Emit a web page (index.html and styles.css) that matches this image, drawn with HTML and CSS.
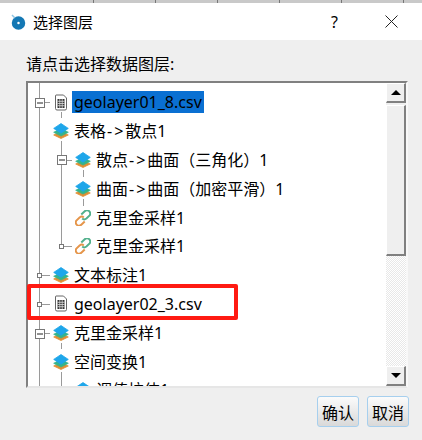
FILE: index.html
```html
<!DOCTYPE html>
<html lang="zh">
    <head>
        <meta charset="utf-8">
        <title>选择图层</title>
        <link rel="stylesheet" href="styles.css">
    </head>
    <body>
        <svg class="defs" width="0" height="0">
            <symbol id="layers" viewBox="0 0 16 16">
                <path d="M8 8.500 L15.300 12 L8 15.500 L.7 12 Z" fill="#e08f35" stroke="#e08f35" stroke-width=".8" stroke-linejoin="round"/>
                <path d="M8 5.500 L15.300 9.300 L8 13 L.7 9.300 Z" fill="#35b48c" stroke="#35b48c" stroke-width=".8" stroke-linejoin="round"/>
                <path d="M8 .5 L15.300 5.400 L8 10.300 L.7 5.400 Z" fill="#1ea6ea" stroke="#1ea6ea" stroke-width=".8" stroke-linejoin="round"/>
            </symbol>
            <symbol id="sheet" viewBox="0 0 13 17">
                <path d="M1.500 1 H9 L12 4 V14.500 Q12 16 10.500 16 H2.500 Q1 16 1 14.500 V2 Q1 1 1.500 1 Z" fill="#fff" stroke="#666"/>
                <path d="M3 5 H10 V14 H3 Z" fill="#333"/>
                <path d="M3 7.300 H10 M3 9.500 H10 M3 11.700 H10 M5.300 5 V14 M7.700 5 V14" stroke="#ddd" stroke-width=".8"/>
            </symbol>
            <symbol id="link" viewBox="1.500 1.500 14 14">
                <path d="M7 5.500 L10 2.600 Q11.600 1 13.500 2.200 Q15.800 4 14.300 6.300 L11.500 9 Q9.500 10.500 7.800 9" fill="none" stroke="#52b08c" stroke-width="1.700"/>
                <path d="M10 11.500 L7 14.400 Q5.400 16 3.500 14.800 Q1.200 13 2.700 10.700 L5.500 8 Q7.500 6.500 9.200 8" fill="none" stroke="#e5954a" stroke-width="1.700"/>
            </symbol>
        </svg>

        <div class="dialog">
            <div class="strip"></div>
            <div class="titlebar">
                <svg class="appicon" width="16" height="16" viewBox="0 0 16 16">
                    <circle cx="8.500" cy="9" r="4" fill="none" stroke="#1478b4" stroke-width="5.500"/>
                    <path d="M2 1 L5 4" stroke="#8fc4e2" stroke-width="1.500"/>
                </svg>
                <span class="title">选择图层</span>
                <span class="help">?</span>
                <svg class="close" width="13" height="13" viewBox="0 0 13 13">
                    <path d="M.5 .5 L12.500 12.500 M12.500 .5 L.5 12.500" stroke="#222" stroke-width="1"/>
                </svg>
            </div>

            <div class="content">
                <p class="label">请点击选择数据图层:</p>

                <div class="treebox">
                    <div class="tree">
                        <!-- connectors use page coordinates through the viewBox -->
                        <svg class="lines" width="358" height="303" viewBox="28 83 358 303">
                            <g stroke="#9a9a9a" fill="none">
                                <path d="M39.500 83 V386"/>
                                <path d="M44 102.500 H50 M42 275.500 H50 M42 304.500 H50 M44 333.500 H50"/>
                                <path d="M61.500 112 V118 M61.500 141 V246.500 H72 M66 160.500 H72"/>
                                <path d="M83.500 170 V177 M83.500 199 V206"/>
                                <path d="M61.500 343 V349 M61.500 372 V386"/>
                            </g>
                            <g fill="#fff" stroke="#777">
                                <rect x="35.500" y="98.500" width="9" height="9"/>
                                <rect x="57.500" y="155.500" width="9" height="9"/>
                                <rect x="35.500" y="329.500" width="9" height="9"/>
                                <rect x="37.500" y="273.500" width="4" height="4"/>
                                <rect x="37.500" y="302.500" width="4" height="4"/>
                                <rect x="59.500" y="244.500" width="4" height="4"/>
                            </g>
                            <path d="M37 103 H43 M59 160 H65 M37 334 H43" stroke="#222"/>
                        </svg>

                        <div class="row level1">
                            <svg class="icon sheet"><use href="#sheet"/></svg>
                            <span class="name selected">geolayer01_8.csv</span>
                        </div>
                        <div class="row level1">
                            <svg class="icon"><use href="#layers"/></svg>
                            <span class="name">表格<span class="op">-&gt;</span>散点1</span>
                        </div>
                        <div class="row level2">
                            <svg class="icon"><use href="#layers"/></svg>
                            <span class="name">散点<span class="op">-&gt;</span>曲面（三角化）1</span>
                        </div>
                        <div class="row level2">
                            <svg class="icon"><use href="#layers"/></svg>
                            <span class="name">曲面<span class="op">-&gt;</span>曲面（加密平滑）1</span>
                        </div>
                        <div class="row level2">
                            <svg class="icon"><use href="#link"/></svg>
                            <span class="name">克里金采样1</span>
                        </div>
                        <div class="row level2">
                            <svg class="icon"><use href="#link"/></svg>
                            <span class="name">克里金采样1</span>
                        </div>
                        <div class="row level1">
                            <svg class="icon"><use href="#layers"/></svg>
                            <span class="name">文本标注1</span>
                        </div>
                        <div class="row level1">
                            <svg class="icon sheet"><use href="#sheet"/></svg>
                            <span class="name">geolayer02_3.csv</span>
                        </div>
                        <div class="row level1">
                            <svg class="icon"><use href="#layers"/></svg>
                            <span class="name">克里金采样1</span>
                        </div>
                        <div class="row level1">
                            <svg class="icon"><use href="#layers"/></svg>
                            <span class="name">空间变换1</span>
                        </div>
                        <div class="row level2">
                            <svg class="icon"><use href="#layers"/></svg>
                            <span class="name">调值拉伸1</span>
                        </div>
                    </div>

                    <div class="scrollbar">
                        <div class="arrow"><span class="tri up"></span></div>
                        <div class="thumb"></div>
                        <div class="track"></div>
                        <div class="arrow"><span class="tri down"></span></div>
                    </div>
                </div>

                <div class="mark"></div>

                <div class="buttons">
                    <button>确认</button>
                    <button>取消</button>
                </div>
            </div>
        </div>
    </body>
</html>
```

FILE: styles.css
```css
html, body {
    margin: 0;
    background-color: #efefef;
}
body {
    width: 422px;
    height: 440px;
    overflow: hidden;
    font-family: "Noto Sans", "Noto Sans CJK SC", sans-serif;
    color: #000;
}
.defs {
    display: block;
    height: 0;
}
.dialog {
    display: flex;
    flex-direction: column;
    height: 440px;
}
.strip {
    height: 3px;
    background: repeating-linear-gradient(90deg, #c9c9c9 0 61px, #777 61px 62px);
    background-position: 32px 0;
}
.titlebar {
    display: flex;
    align-items: center;
    height: 37px;
    padding: 0 24px 0 10px;
    background-color: #fff;
}
.appicon {
    margin-right: 7px;
}
.title {
    font-size: 15px;
}
.help {
    margin-left: auto;
    margin-right: 47px;
    font-size: 16px;
}
.content {
    position: relative;
    flex: 1;
    padding: 0 13px 0 26px;
}
.label {
    margin: 0;
    height: 41px;
    line-height: 48px;
    font-size: 16px;
}
.treebox {
    display: flex;
    width: 382px;
    height: 307px;
    box-sizing: border-box;
    border-top: 2px solid #808080;
    border-left: 2px solid #808080;
    border-right: 2px solid #f8f8f8;
    border-bottom: 2px solid #e6e6e6;
    background-color: #fff;
}
.tree {
    position: relative;
    flex: 1;
    padding-top: 5px;
    overflow: hidden;
}
.lines {
    position: absolute;
    top: 0;
    left: 0;
}
.row {
    position: relative;
    display: flex;
    align-items: center;
    height: 28.8px;
    font-size: 16px;
    white-space: nowrap;
}
.level1 {
    padding-left: 25px;
}
.level2 {
    padding-left: 47px;
}
.icon {
    width: 16px;
    height: 16px;
    flex: none;
}
.sheet {
    height: 17px;
}
.name {
    margin-left: 5px;
    line-height: 22px;
}
.op {
    margin-left: 1px;
    letter-spacing: 2px;
}
.selected {
    margin-left: 3px;
    padding: 0 2px;
    background-color: #0a70d2;
}
.scrollbar {
    display: flex;
    flex-direction: column;
    width: 20px;
    flex: none;
    background-color: #efefef;
}
.arrow {
    display: flex;
    align-items: center;
    justify-content: center;
    height: 20px;
    flex: none;
    box-sizing: border-box;
    background-color: #efefef;
    border-top: 1px solid #fff;
    border-left: 1px solid #fff;
    border-right: 2px solid #808080;
    border-bottom: 2px solid #808080;
}
.tri {
    width: 0;
    height: 0;
    border-left: 5px solid transparent;
    border-right: 5px solid transparent;
}
.up {
    border-bottom: 5px solid #000;
}
.down {
    border-top: 5px solid #000;
}
.thumb {
    height: 151px;
    margin-top: 2px;
    flex: none;
    box-sizing: border-box;
    background-color: #efefef;
    border-top: 1px solid #fff;
    border-left: 1px solid #fff;
    border-right: 2px solid #808080;
    border-bottom: 2px solid #808080;
}
.track {
    flex: 1;
    background: repeating-conic-gradient(#e8e8e8 0 25%, #fff 0 50%) 0 0 / 2px 2px;
}
.mark {
    position: absolute;
    top: 244px;
    left: 27px;
    width: 211px;
    height: 36px;
    box-sizing: border-box;
    border: 4px solid #ff1a12;
    border-radius: 2px;
}
.buttons {
    display: flex;
    justify-content: flex-end;
    gap: 8px;
    margin-top: 8px;
}
button {
    width: 42px;
    height: 31px;
    padding: 0;
    box-sizing: border-box;
    border: 1px solid #a6cfee;
    border-radius: 3px;
    background: linear-gradient(#fbfbfb, #d9d9d9);
    font-family: inherit;
    font-size: 16px;
    color: #000;
}
```
